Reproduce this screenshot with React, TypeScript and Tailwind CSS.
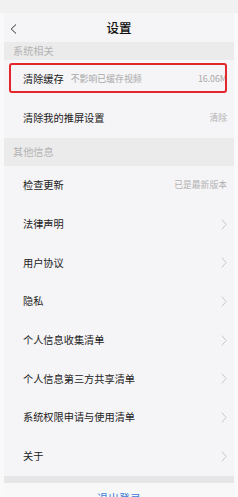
import React from "react";

const font = { fontFamily: '"Noto Sans CJK SC", "Noto Sans", sans-serif' };

function Chevron() {
  return (
    <svg width="6" height="11" viewBox="0 0 6 11" className="shrink-0">
      <path d="M0.8 0.6 L5.2 5.5 L0.8 10.4" fill="none" stroke="#c4c4c4" strokeWidth="0.9" />
    </svg>
  );
}

function Row({ label, right, chevron = true }: { label: string; right?: string; chevron?: boolean }) {
  return (
    <div className="h-[38.7px] flex items-center pl-[19px] pr-[7px] justify-between">
      <span className="text-[10.2px] text-[#222] leading-none">{label}</span>
      {right ? (
        <span className="text-[8.8px] text-[#b2b2b2] leading-none">{right}</span>
      ) : chevron ? (
        <Chevron />
      ) : null}
    </div>
  );
}

export default function App() {
  return (
    <div className="w-[238px] h-[497px] overflow-hidden bg-[#f9f9f9]" style={font}>
      <div className="h-[13px] bg-[#f1f1f1]" />
      <div className="ml-[4px] w-[230px] bg-[#f5f4f6]">
        <div className="h-[29px] relative flex items-center justify-center">
          <svg width="7" height="10" viewBox="0 0 7 10" className="absolute left-[6px] top-[11px]">
            <path d="M6 0.5 L1.2 5 L6 9.5" fill="none" stroke="#333" strokeWidth="1" />
          </svg>
          <span className="text-[12.5px] text-[#111] font-medium leading-none mt-[1px]">设置</span>
        </div>
        <div className="h-[18px] bg-[#ebebeb] pl-[9px] flex items-center">
          <span className="text-[10.2px] text-[#b3b3b3] leading-none">系统相关</span>
        </div>
        <div className="h-[38px] relative flex items-center pl-[19px] pr-[7px] justify-between">
          <div className="flex items-center gap-[7px]">
            <span className="text-[10.2px] text-[#222] leading-none">清除缓存</span>
            <span className="text-[8.9px] text-[#a8a8a8] leading-none">不影响已缓存视频</span>
          </div>
          <span className="text-[8.8px] text-[#a8a8a8] leading-none">16.06M</span>
          <div className="absolute left-[5px] top-[3px] w-[218px] h-[30px] border-2 border-[#e3262b] rounded-[3px]" />
        </div>
        <div className="h-[40px] flex items-center pl-[19px] pr-[7px] justify-between">
          <span className="text-[10.2px] text-[#222] leading-none">清除我的推屏设置</span>
          <span className="text-[8.8px] text-[#b2b2b2] leading-none">清除</span>
        </div>
        <div className="h-[28px] bg-[#ebebeb] pl-[9px] flex items-center">
          <span className="text-[10.2px] text-[#b3b3b3] leading-none">其他信息</span>
        </div>
        <Row label="检查更新" right="已是最新版本" />
        <Row label="法律声明" />
        <Row label="用户协议" />
        <Row label="隐私" />
        <Row label="个人信息收集清单" />
        <Row label="个人信息第三方共享清单" />
        <Row label="系统权限申请与使用清单" />
        <Row label="关于" />
        <div className="h-[7px] bg-[#e6e6e6]" />
        <div className="h-[20px] bg-[#f8f8f8] flex justify-center">
          <span className="text-[11px] text-[#3b7dd8] leading-[14px] mt-[8px]">退出登录</span>
        </div>
      </div>
    </div>
  );
}
